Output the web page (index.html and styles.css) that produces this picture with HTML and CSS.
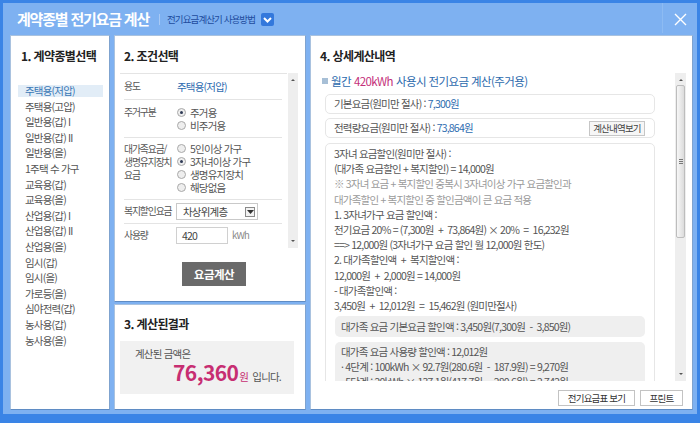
FILE: index.html
```html
<!DOCTYPE html>
<html lang="ko">
<head>
<meta charset="utf-8">
<title>계약종별 전기요금 계산</title>
<link rel="stylesheet" href="styles.css">
</head>
<body>
<div class="window">
  <header class="titlebar">
    <h1 class="title">계약종별 전기요금 계산</h1>
    <span class="sep"></span>
    <a class="howto">전기요금계산기 사용방법</a>
    <span class="chev"><svg width="13" height="13" viewBox="0 0 13 13"><polyline points="3,5 6.5,8.5 10,5" fill="none" stroke="#fff" stroke-width="2"/></svg></span>
    <span class="spacer"></span>
    <span class="vline"></span>
    <span class="close"><svg width="13" height="13" viewBox="0 0 13 13"><path d="M1 1 L12 12 M12 1 L1 12" stroke="#fff" stroke-width="1.4" fill="none"/></svg></span>
  </header>
  <main class="panels">
    <section class="panel p1">
      <h2 class="ptitle">1. 계약종별선택</h2>
      <ul class="kinds">
        <li class="on">주택용(저압)</li>
        <li>주택용(고압)</li>
        <li>일반용(갑) I</li>
        <li>일반용(갑) II</li>
        <li>일반용(을)</li>
        <li>1주택 수 가구</li>
        <li>교육용(갑)</li>
        <li>교육용(을)</li>
        <li>산업용(갑) I</li>
        <li>산업용(갑) II</li>
        <li>산업용(을)</li>
        <li>임시(갑)</li>
        <li>임시(을)</li>
        <li>가로등(을)</li>
        <li>심야전력(갑)</li>
        <li>농사용(갑)</li>
        <li>농사용(을)</li>
      </ul>
    </section>
    <div class="col2">
      <section class="panel p2">
        <h2 class="ptitle">2. 조건선택</h2>
        <div class="cond">
          <div class="cond-body">
            <div class="row r1"><span class="lbl">용도</span><span class="val blue">주택용(저압)</span></div>
            <div class="row r2"><span class="lbl">주거구분</span>
              <div class="radios">
                <label class="radio"><span class="dot on"></span>주거용</label>
                <label class="radio"><span class="dot"></span>비주거용</label>
              </div>
            </div>
            <div class="row r3"><span class="lbl">대가족요금/<br>생명유지장치<br>요금</span>
              <div class="radios">
                <label class="radio"><span class="dot"></span>5인이상 가구</label>
                <label class="radio"><span class="dot on"></span>3자녀이상 가구</label>
                <label class="radio"><span class="dot"></span>생명유지장치</label>
                <label class="radio"><span class="dot"></span>해당없음</label>
              </div>
            </div>
            <div class="row r4"><span class="lbl">복지할인요금</span>
              <div class="select"><span>차상위계층</span><span class="sel-btn"><svg width="7" height="4" viewBox="0 0 7 4"><path d="M0 0 H7 L3.5 4 Z" fill="#333"/></svg></span></div>
            </div>
            <div class="row r5"><span class="lbl">사용량</span>
              <div class="input">420</div><span class="unit">kWh</span>
            </div>
          </div>
          <div class="vscroll small">
            <span class="arr up"></span>
            <span class="arr down"></span>
          </div>
        </div>
        <button class="calc">요금계산</button>
      </section>
      <section class="panel p3">
        <h2 class="ptitle">3. 계산된결과</h2>
        <div class="result">
          <p class="r-lead">계산된 금액은</p>
          <p class="r-amt"><strong>76,360</strong><span class="won">원</span> 입니다.</p>
        </div>
      </section>
    </div>
    <section class="panel p4">
      <h2 class="ptitle">4. 상세계산내역</h2>
      <div class="detail">
        <div class="detail-body">
          <h3 class="dhead"><span class="sq"></span>월간 <em>420kWh</em> 사용시 전기요금 계산(주거용)</h3>
          <div class="dbox">기본요금(원미만 절사) : <span class="blue">7,300원</span></div>
          <div class="dbox with-btn">전력량요금(원미만 절사) : <span class="blue">73,864원</span><button class="mini">계산내역보기</button></div>
          <div class="dbox big">
            <p>3자녀 요금할인(원미만 절사) :</p>
            <p>(대가족 요금할인 + 복지할인) = 14,000원</p>
            <p class="light">※ 3자녀 요금 + 복지할인 중복시 3자녀이상 가구 요금할인과</p>
            <p class="light">대가족할인 + 복지할인 중 할인금액이 큰 요금 적용</p>
            <p>1. 3자녀가구 요금 할인액 :</p>
            <p>전기요금 20% = (7,300원 &nbsp;+ &nbsp;73,864원) × 20% &nbsp;= &nbsp;16,232원</p>
            <p>=&#8203;=&#8203;&gt; 12,000원 (3자녀가구 요금 할인 월 12,000원 한도)</p>
            <p>2. 대가족할인액 &nbsp;+ &nbsp;복지할인액 :</p>
            <p>12,000원 &nbsp;+ &nbsp;2,000원 = 14,000원</p>
            <p>- 대가족할인액 :</p>
            <p>3,450원 &nbsp;+ &nbsp;12,012원 &nbsp;= &nbsp;15,462원 (원미만절사)</p>
            <div class="gbox one">대가족 요금 기본요금 할인액 : 3,450원(7,300원 &nbsp;- &nbsp;3,850원)</div>
            <div class="gbox two">
              <p>대가족 요금 사용량 할인액 : 12,012원</p>
              <p>· 4단계 : 100kWh × 92.7원(280.6원 &nbsp;- &nbsp;187.9원) = 9,270원</p>
              <p>· 5단계 : 20kWh × 137.1원(417.7원 &nbsp;- &nbsp;280.6원) = 2,742원</p>
            </div>
          </div>
        </div>
        <div class="vscroll">
          <span class="arr up"></span>
          <span class="thumb"><span class="grip"></span></span>
          <span class="arr down"></span>
        </div>
      </div>
      <div class="btns">
        <button class="btn wide">전기요금표 보기</button>
        <button class="btn narrow">프린트</button>
      </div>
    </section>
  </main>
</div>
</body>
</html>
```
FILE: styles.css
```css
* { box-sizing: border-box; margin: 0; padding: 0; }
html, body { width: 700px; height: 423px; overflow: hidden; }
body {
  background: #3a84e6;
  font-family: "Noto Sans CJK KR", "Noto Sans", sans-serif;
  font-size: 10.5px;
  letter-spacing: -0.8px;
  color: #555;
}
ul { list-style: none; }
button { font-family: inherit; letter-spacing: inherit; cursor: pointer; white-space: nowrap; }

.window {
  margin: 3px 3px 0 3px;
  height: 411px;
  background: #7eb1f1;
  display: flex;
  flex-direction: column;
}

/* title bar */
.titlebar {
  height: 32px;
  display: flex;
  align-items: center;
  padding-left: 14px;
}
.title {
  font-size: 15px;
  font-weight: bold;
  color: #fff;
  letter-spacing: -1.2px;
  line-height: 18px;
}
.sep {
  width: 1px;
  height: 11px;
  background: #a8c9f5;
  margin: 0 7px 0 10px;
}
.howto {
  font-size: 9.5px;
  letter-spacing: -0.9px;
  color: #1d4c9e;
}
.chev {
  width: 13px;
  height: 13px;
  margin-left: 6px;
  background: #3378dc;
  border-radius: 2px;
  display: flex;
}
.spacer { flex: 1; }
.vline {
  align-self: flex-start;
  width: 1px;
  height: 30px;
  background: #8dbbf3;
  margin-right: 11px;
}
.close { display: flex; margin-right: 10px; }

/* panels */
.panels {
  display: flex;
  gap: 4px;
  padding: 0 4px 0 7px;
  height: 375px;
}
.panel {
  background: #fff;
  border: 1px solid #a9c2df;
  border-bottom-color: #5f8cc4;
  border-right-color: #7fa3cf;
}
.ptitle {
  font-size: 12px;
  font-weight: bold;
  color: #222;
  line-height: 16px;
  letter-spacing: -0.6px;
}
.p1 { width: 100px; padding: 12px 6px 0 7px; }
.p1 .ptitle { padding-left: 3px; }
.kinds { margin-top: 21px; }
.kinds li {
  height: 12px;
  line-height: 12px;
  margin-bottom: 3.6px;
  padding-left: 7px;
  white-space: nowrap;
}
.kinds li.on { background: #e2edf7; color: #3a78b5; }

.col2 { width: 192px; display: flex; flex-direction: column; gap: 2px; }
.p2 { height: 267px; padding: 12px 7px 0 5px; }
.p2 .ptitle { padding-left: 4px; }
.cond {
  margin-top: 9px;
  height: 175px;
  display: flex;
  gap: 1px;
}
.cond-body {
  flex: 1;
  border-top: 1px solid #e4e4e4;
  padding: 0 5px 0 4px;
}
.row {
  display: flex;
  border-bottom: 1px solid #e4e4e4;
  line-height: 13px;
}
.row:last-child { border-bottom: none; }
.lbl {
  width: 53px;
  flex-shrink: 0;
  white-space: nowrap;
  font-size: 9.8px;
  letter-spacing: -1.1px;
}
.blue { color: #2e6cb0; }
.r1 { padding: 6px 0 6px; }
.r2 { padding: 6px 0 5px; }
.r3 { padding: 4px 0 5px; }
.r4 { padding: 3px 0 3px; align-items: center; }
.r5 { padding: 3px 0 0; align-items: center; }
.r3 .lbl { padding-top: 1px; }
.radio { display: flex; align-items: center; white-space: nowrap; }
.dot {
  width: 9px;
  height: 9px;
  border-radius: 50%;
  border: 1px solid #a9a9a9;
  background: #eee;
  margin-right: 4px;
  position: relative;
  flex-shrink: 0;
}
.dot.on::after {
  content: "";
  position: absolute;
  left: 2px; top: 2px;
  width: 3px; height: 3px;
  border-radius: 50%;
  background: #2e3a55;
}
.select {
  width: 82px;
  height: 17px;
  border: 1px solid #c9c9c9;
  display: flex;
  align-items: center;
  justify-content: space-between;
  padding: 0 2px 0 6px;
  margin-left: -1px;
  color: #444;
}
.sel-btn {
  width: 10px;
  height: 10px;
  border: 1px solid #8a8a8a;
  background: #f3f3f3;
  display: flex;
  align-items: center;
  justify-content: center;
}
.input {
  width: 52px;
  height: 17px;
  border: 1px solid #d0d0d0;
  margin-left: -1px;
  padding-left: 5px;
  line-height: 15px;
  color: #444;
}
.unit { margin-left: 4px; color: #888; font-size: 9.5px; }

.vscroll {
  width: 11px;
  background: #eeeeee;
  display: flex;
  flex-direction: column;
  align-items: center;
}
.vscroll.small { width: 10px; }
.arr {
  width: 10px; height: 10px;
  display: flex; align-items: center; justify-content: center;
}
.arr::before {
  content: "";
  border-left: 2px solid transparent;
  border-right: 2px solid transparent;
}
.arr.up::before { border-bottom: 2px solid #555; }
.arr.down::before { border-top: 2px solid #555; }
.vscroll .down { margin-top: auto; margin-bottom: 2px; }
.vscroll .up { margin-top: 2px; }
.thumb {
  width: 9px;
  height: 153px;
  border: 1px solid #bdbdbd;
  border-radius: 2px;
  background: linear-gradient(to right, #f7f7f7, #dcdcdc);
  display: flex;
  align-items: center;
  justify-content: center;
}
.grip {
  width: 4px;
  height: 5px;
  border-top: 1px solid #777;
  border-bottom: 1px solid #777;
  display: flex;
  align-items: center;
}
.grip::after {
  content: "";
  width: 4px;
  border-top: 1px solid #777;
}

.calc {
  margin: 14px 0 0 62px;
  width: 64px;
  height: 24px;
  border: none;
  background: #6a6a6a;
  color: #fff;
  font-size: 11.5px;
  font-weight: bold;
  letter-spacing: -0.5px;
}

.p3 { flex: 1; padding: 11px 10px 0 5px; }
.p3 .ptitle { padding-left: 4px; }
.result {
  margin-top: 9px;
  width: 174px;
  height: 53px;
  background: #f1f1f1;
  padding: 6px 13px 0 15px;
}
.r-lead { line-height: 13px; }
.r-amt {
  text-align: right;
  line-height: 24px;
}
.r-amt strong {
  font-size: 21px;
  font-weight: bold;
  color: #c72e72;
  letter-spacing: -0.6px;
}
.won { color: #c72e72; margin: 0 2px 0 1px; }

.p4 { flex: 1; padding: 12px 6px 0 7px; display: flex; flex-direction: column; }
.p4 .ptitle { padding-left: 2px; }
.detail {
  margin-top: 9px;
  height: 308px;
  display: flex;
  gap: 3px;
  overflow: hidden;
}
.detail-body { flex: 1; overflow: hidden; padding-left: 4px; }
.dhead {
  font-size: 11.5px;
  font-weight: normal;
  color: #2c6aad;
  letter-spacing: -0.6px;
  line-height: 16px;
  display: flex;
  align-items: center;
}
.dhead em { font-style: normal; color: #c4307a; margin: 0 3px; }
.sq {
  width: 6px; height: 6px;
  background: #a7bfd6;
  margin-right: 3px;
}
.dbox {
  margin: 0 17px 4px 3px;
  border: 1px solid #e6e6e6;
  border-radius: 5px;
  height: 20px;
  line-height: 18px;
  padding-left: 8px;
  display: flex;
  align-items: center;
  white-space: pre;
}
.dhead + .dbox { margin-top: 5px; }
.with-btn .mini {
  margin-left: auto;
  margin-right: 9px;
  height: 15px;
  width: 56px;
  border: 1px solid #c6c6c6;
  background: #f6f6f6;
  color: #444;
  font-size: 9.5px;
  line-height: 13px;
}
.dbox.big {
  display: block;
  height: auto;
  line-height: 15.2px;
  padding-top: 2px;
  margin-top: 5px;
  white-space: normal;
}
.big p { white-space: nowrap; }
.light { color: #9a9a9a; }
.gbox {
  background: #efefef;
  border-radius: 5px;
  margin: 0 9px 0 1px;
  padding-left: 6px;
  white-space: nowrap;
}
.gbox.one { margin-top: 3px; height: 21px; line-height: 21px; }
.gbox.two { margin-top: 5px; padding-top: 2px; line-height: 15px; }

.btns {
  margin-top: 9px;
  display: flex;
  justify-content: flex-end;
  gap: 5px;
  padding-right: 3px;
}
.btn {
  height: 16px;
  border: 1px solid #c3c3c3;
  background: #fff;
  color: #333;
  font-size: 9.5px;
  line-height: 14px;
  padding: 0;
}
.btn.wide { width: 77px; }
.btn.narrow { width: 43px; }
```
